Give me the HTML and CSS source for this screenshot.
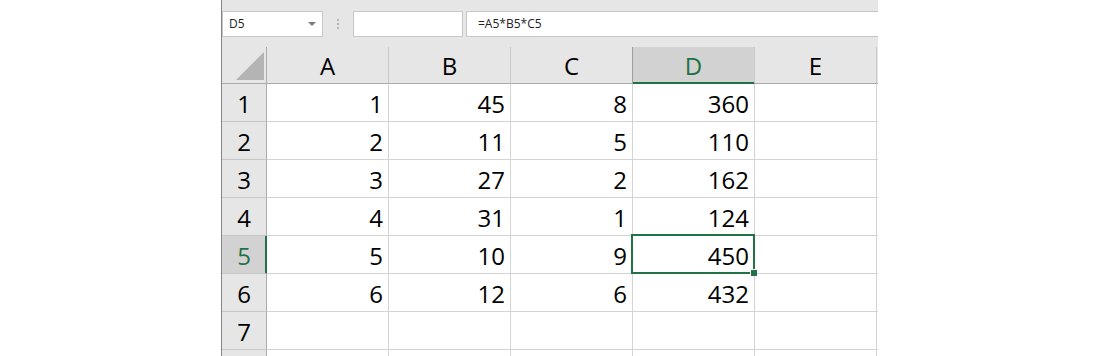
FILE: index.html
```html
<!DOCTYPE html>
<html lang="en">
<head>
  <meta charset="UTF-8" />
  <title>Sheet</title>
  <link rel="stylesheet" href="styles.css">
</head>
<body>

  <div class="window">

    <!-- name box / formula bar -->
    <div class="toolbar">
      <div class="namebox">D5<span class="arrow"></span></div>
      <div class="dots"><i></i><i></i><i></i></div>
      <div class="fx-box"></div>
      <div class="formula">=A5*B5*C5</div>
    </div>

    <!-- grid -->
    <div class="sheet">
      <div class="corner"><span class="tri"></span></div>
      <div class="col-head">A</div>
      <div class="col-head">B</div>
      <div class="col-head">C</div>
      <div class="col-head sel">D</div>
      <div class="col-head">E</div>
      <div class="col-head fill"></div>

      <div class="row-head">1</div>
      <div class="cell">1</div><div class="cell">45</div><div class="cell">8</div><div class="cell">360</div><div class="cell"></div><div class="cell fill"></div>

      <div class="row-head">2</div>
      <div class="cell">2</div><div class="cell">11</div><div class="cell">5</div><div class="cell">110</div><div class="cell"></div><div class="cell fill"></div>

      <div class="row-head">3</div>
      <div class="cell">3</div><div class="cell">27</div><div class="cell">2</div><div class="cell">162</div><div class="cell"></div><div class="cell fill"></div>

      <div class="row-head">4</div>
      <div class="cell">4</div><div class="cell">31</div><div class="cell">1</div><div class="cell">124</div><div class="cell"></div><div class="cell fill"></div>

      <div class="row-head sel">5</div>
      <div class="cell">5</div><div class="cell">10</div><div class="cell">9</div><div class="cell active">450</div><div class="cell"></div><div class="cell fill"></div>

      <div class="row-head">6</div>
      <div class="cell">6</div><div class="cell">12</div><div class="cell">6</div><div class="cell">432</div><div class="cell"></div><div class="cell fill"></div>

      <div class="row-head">7</div>
      <div class="cell"></div><div class="cell"></div><div class="cell"></div><div class="cell"></div><div class="cell"></div><div class="cell fill"></div>

      <!-- 다음 행 (화면 아래로 잘림) -->
      <div class="row-head"></div>
      <div class="cell"></div><div class="cell"></div><div class="cell"></div><div class="cell"></div><div class="cell"></div><div class="cell fill"></div>
    </div>

  </div>

</body>
</html>
```

FILE: styles.css
```css
* {
  box-sizing: border-box;
}

body {
  margin: 0;
  background: #fff;
  font-family: 'Open Sans', 'Noto Sans', sans-serif;
  overflow: hidden;
}

.window {
  margin-left: 221px;
  width: 657px;
  height: 356px;
  overflow: hidden;
  border-left: 1px solid #858585;
  background: #e6e6e6;
}

/* 상단 입력줄 */
.toolbar {
  display: flex;
  align-items: flex-start;
  height: 47px;
  padding-top: 11px;
}

.namebox {
  display: flex;
  align-items: center;
  justify-content: space-between;
  width: 101px;
  height: 26px;
  padding: 0 5px 1px 6px;
  background: #fff;
  border: 1px solid #c6c6c6;
  font-size: 12px;
  color: #222;
}

.namebox .arrow {
  width: 0;
  height: 0;
  margin-right: 1px;
  border-left: 4px solid transparent;
  border-right: 4px solid transparent;
  border-top: 4px solid #7a7a7a;
}

.dots {
  display: flex;
  flex-direction: column;
  gap: 2px;
  width: 30px;
  padding: 8px 0 0 14px;
}

.dots i {
  display: block;
  width: 2px;
  height: 2px;
  background: #b4b4b4;
}

.fx-box {
  width: 110px;
  height: 26px;
  background: #fff;
  border: 1px solid #c6c6c6;
}

.formula {
  flex: 1;
  height: 26px;
  margin-left: 3px;
  padding: 3px 0 0 11px;
  background: #fff;
  border: 1px solid #c6c6c6;
  border-right: none;
  font-size: 12px;
  color: #222;
}

/* 시트 */
.sheet {
  display: grid;
  grid-template-columns: 45px repeat(5, 122px) 1fr;
  grid-template-rows: 37px repeat(8, 38px);
  background: #fff;
  font-size: 24px;
  color: #000;
}

.corner {
  display: flex;
  align-items: flex-end;
  justify-content: flex-end;
  padding: 0 2px 3px 0;
  background: #e6e6e6;
  border-right: 1px solid #ababab;
  border-bottom: 1px solid #ababab;
}

.corner .tri {
  width: 0;
  height: 0;
  border-left: 28px solid transparent;
  border-bottom: 28px solid #b4b4b4;
}

.col-head {
  display: flex;
  align-items: center;
  justify-content: center;
  padding-top: 1px;
  background: #e6e6e6;
  border-right: 1px solid #c8c8c8;
  border-bottom: 1px solid #ababab;
}

.col-head.sel {
  background: #d2d2d2;
  color: #217346;
  border-bottom-color: #217346;
  box-shadow: inset 0 -1px 0 #217346, -1px 0 0 #9e9e9e;
}

.col-head.fill,
.cell.fill {
  border-right: none;
}

.row-head {
  display: flex;
  align-items: center;
  justify-content: center;
  padding-top: 1px;
  background: #e6e6e6;
  border-right: 1px solid #ababab;
  border-bottom: 1px solid #c6c6c6;
}

.row-head.sel {
  background: #d2d2d2;
  color: #217346;
  border-right-color: #217346;
  box-shadow: inset -1px 0 0 #217346;
}

.cell {
  display: flex;
  align-items: center;
  justify-content: flex-end;
  padding: 1px 5px 0 0;
  border-right: 1px solid #d4d4d4;
  border-bottom: 1px solid #d4d4d4;
}

/* 선택 셀 */
.cell.active {
  position: relative;
}

.cell.active::before {
  content: '';
  position: absolute;
  top: -2px;
  left: -2px;
  right: -1px;
  bottom: -1px;
  border: 2px solid #217346;
}

.cell.active::after {
  content: '';
  position: absolute;
  right: -3px;
  bottom: -3px;
  width: 6px;
  height: 6px;
  background: #217346;
  border: 1px solid #fff;
  border-width: 1px 0 0 1px;
}
```
